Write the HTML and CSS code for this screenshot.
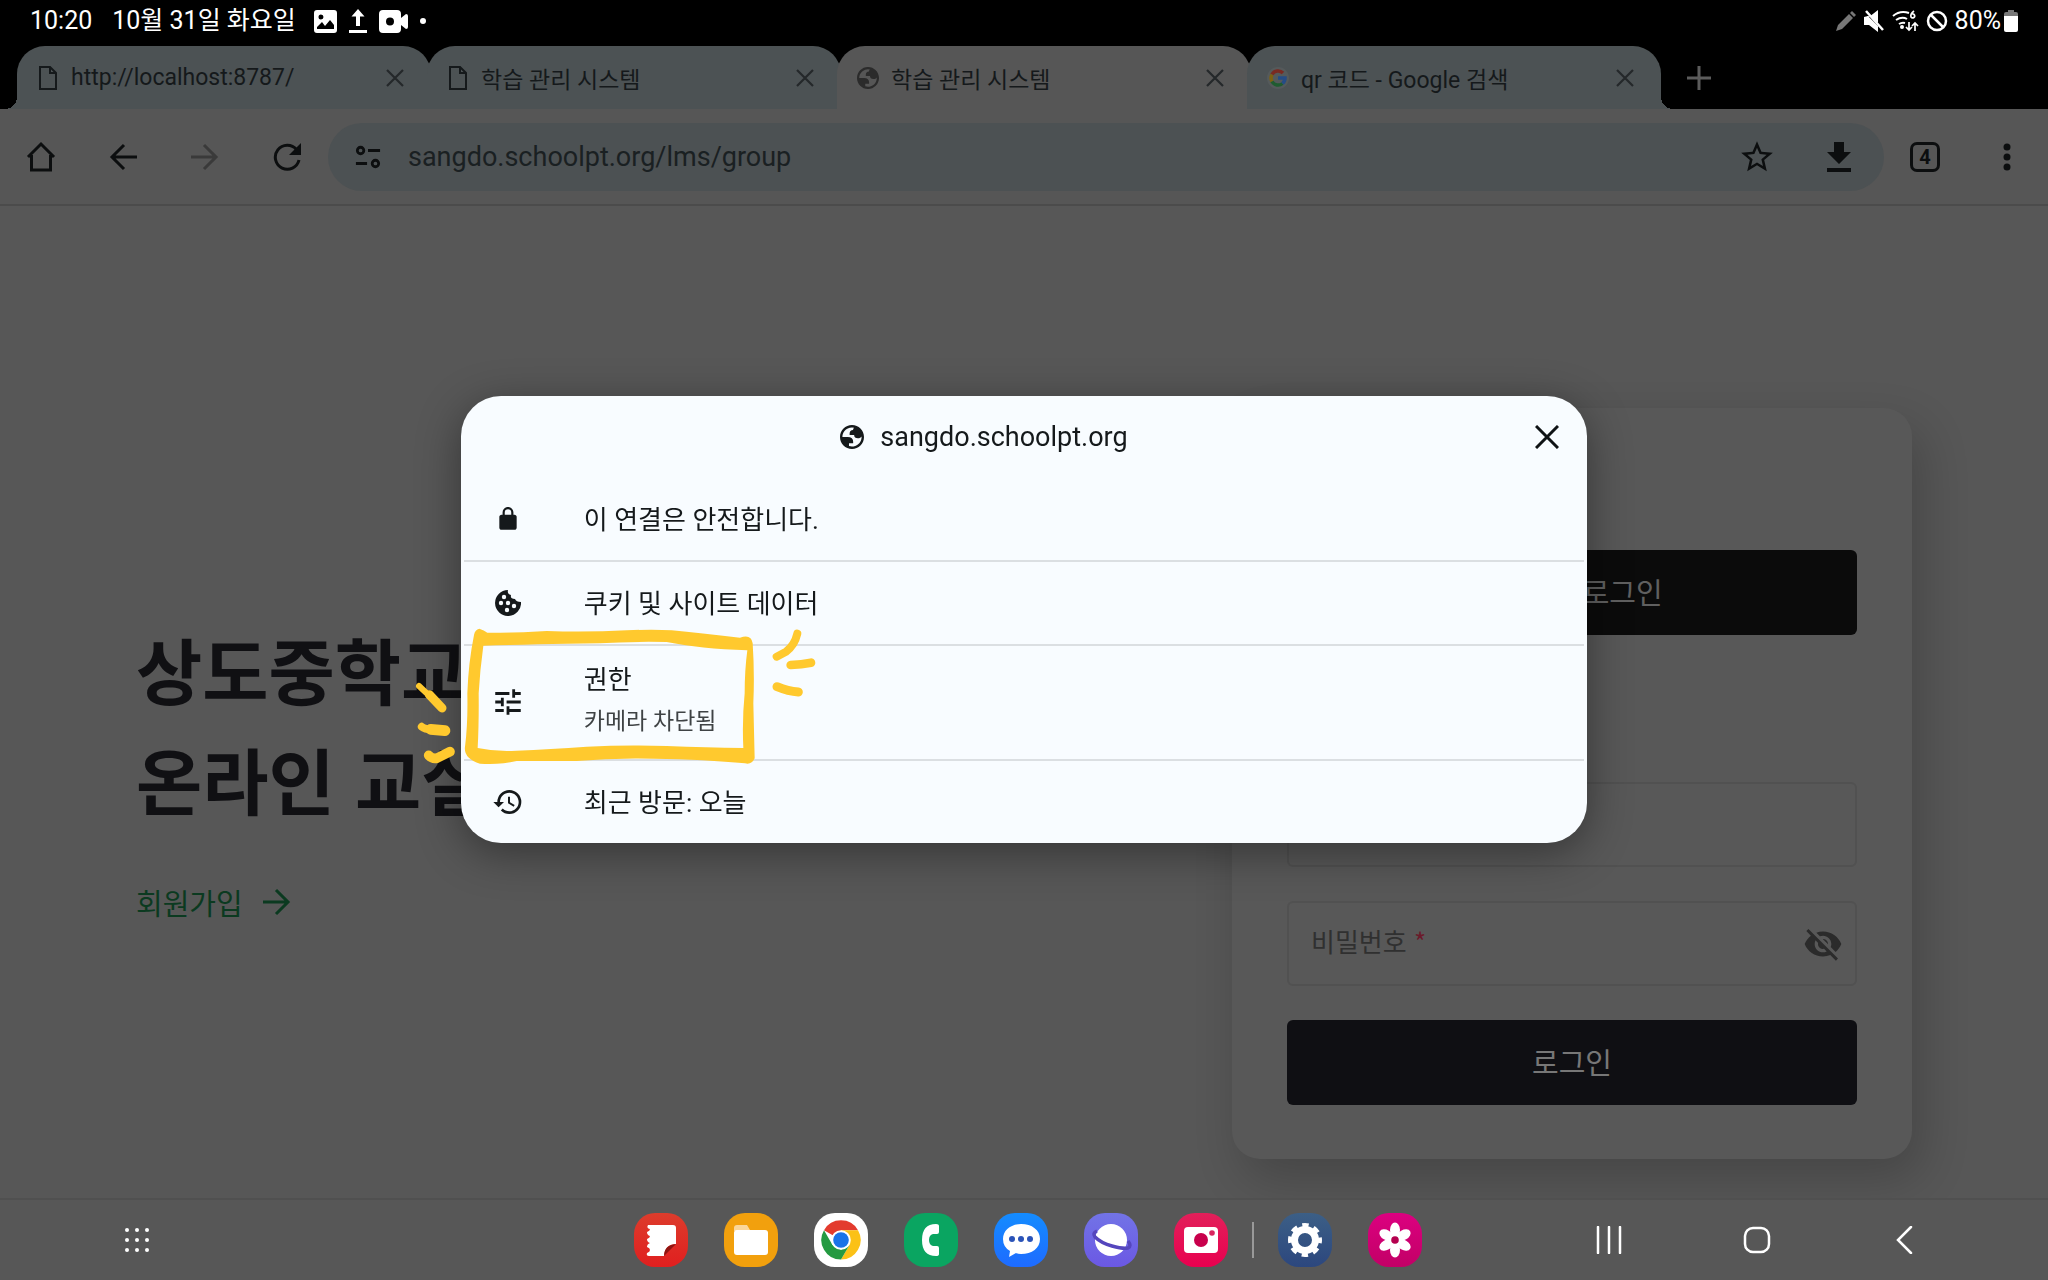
FILE: index.html
```html
<!DOCTYPE html>
<html lang="ko">
<head>
  <meta charset="UTF-8" />
  <meta name="viewport" content="width=device-width, initial-scale=1" />
  <title>학습 관리 시스템</title>
  <link rel="stylesheet" href="styles.css">
</head>
<body>

<!-- shared icons -->
<svg class="sprite" aria-hidden="true">
  <symbol id="i-file" viewBox="0 0 20 26"><path d="M2 2h10l6 6v16H2zM12 2v6h6" fill="none" stroke="currentColor" stroke-width="2" /></symbol>
  <symbol id="i-close" viewBox="0 0 24 24"><path d="M4 4l16 16M20 4L4 20" fill="none" stroke="currentColor" stroke-width="2.2" /></symbol>
  <symbol id="i-globe" viewBox="2 2 20 20"><path fill="currentColor" fill-rule="evenodd" d="M12 2C6.48 2 2 6.48 2 12s4.48 10 10 10 10-4.48 10-10S17.52 2 12 2zM4 12h4.4c3.407.022 4.922 1.73 4.543 5.127H9.488v2.47a8.004 8.004 0 0 0 10.498-8.083C19.327 12.504 18.332 13 17 13c-2.137 0-3.206-.916-3.206-2.75h-3.748c-.274-2.728.683-4.092 2.87-4.092 0-.975.327-1.597.811-1.97A8.004 8.004 0 0 0 4 12z" /></symbol>
</svg>

<header class="status-bar">
  <div class="status-left">
    <span class="time">10:20</span>
    <span class="date">10월 31일 화요일</span>
    <svg width="23" height="23" viewBox="0 0 23 23"><path fill="#fff" fill-rule="evenodd" d="M3 0h17a3 3 0 0 1 3 3v17a3 3 0 0 1-3 3H3a3 3 0 0 1-3-3V3a3 3 0 0 1 3-3zM7 4.500a2.500 2.500 0 1 0 0 5 2.500 2.500 0 0 0 0-5zM3 19v-2l5-5 3 4 5-6 4 5v-2 6z" /></svg>
    <svg width="20" height="24" viewBox="0 0 20 24"><path fill="#fff" d="M10 0l6.500 7.500H12V17H8V7.500H3.500zM1 21h18v3H1z" /></svg>
    <svg width="29" height="23" viewBox="0 0 29 23"><path fill="#fff" fill-rule="evenodd" d="M4 0h14a4 4 0 0 1 4 4v4l5-4q2 0 2 2v11q0 2-2 2l-5-4v4a4 4 0 0 1-4 4H4a4 4 0 0 1-4-4V4a4 4 0 0 1 4-4zM11 7.500a4 4 0 1 0 0 8 4 4 0 0 0 0-8z" /></svg>
    <span class="more-dot"></span>
  </div>
  <div class="status-right">
    <svg width="20" height="20" viewBox="0 0 20 20"><path fill="#777" d="M0 20l2-6L13 3l4 4L6 18zM14 2l2-2 4 4-2 2z" /></svg>
    <svg width="22" height="22" viewBox="0 0 22 22"><path fill="#fff" d="M1 7h5l9-7v13L7 6M1 7v8h5l9 7v-6L5 6z" /><path d="M3 1l17 19" stroke="#fff" stroke-width="2.500" /></svg>
    <svg width="27" height="22" viewBox="0 0 27 22" fill="none" stroke="#fff" stroke-width="2">
      <path d="M1 6Q8 0 17 3M4 10Q10 6 15 9M7 14Q10 12 13 13" /><circle cx="10" cy="17" r="1" />
      <path d="M22 1q-4 3-3 6a2 2 0 1 0 1-3M17 12v8M14 17l3 3 3-3M23 21v-8M20 16l3-3 3 3" stroke-width="1.700" />
    </svg>
    <svg width="22" height="22" viewBox="0 0 22 22" fill="none" stroke="#fff" stroke-width="2.500"><circle cx="11" cy="11" r="9" /><path d="M5 5l12 12" /></svg>
    <div class="battery">
      <span>80%</span>
      <svg width="14" height="22" viewBox="0 0 14 22"><path fill="#777" d="M4 0h6v2h2q2 0 2 2v3H0V4q0-2 2-2h2z" /><path fill="#fff" d="M0 6h14v14q0 2-2 2H2q-2 0-2-2z" /></svg>
    </div>
  </div>
</header>

<div class="tab-strip">
  <div class="tab tab-first">
    <svg class="tab-icon" width="22" height="26"><use href="#i-file" /></svg>
    <span class="tab-title">http://localhost:8787/</span>
    <button class="tab-close" aria-label="탭 닫기"><svg width="24" height="24"><use href="#i-close" /></svg></button>
  </div>
  <div class="tab">
    <svg class="tab-icon" width="22" height="26"><use href="#i-file" /></svg>
    <span class="tab-title">학습 관리 시스템</span>
    <button class="tab-close" aria-label="탭 닫기"><svg width="24" height="24"><use href="#i-close" /></svg></button>
  </div>
  <div class="tab tab-active">
    <svg class="tab-icon tab-globe" width="22" height="22"><use href="#i-globe" /></svg>
    <span class="tab-title">학습 관리 시스템</span>
    <button class="tab-close" aria-label="탭 닫기"><svg width="24" height="24"><use href="#i-close" /></svg></button>
  </div>
  <div class="tab tab-last">
    <svg class="tab-icon" width="22" height="24" viewBox="0 0 22 24" fill="none" stroke-width="3.500">
      <circle cx="11" cy="12" r="11" fill="#555a5b" />
      <path d="M16 7A7 7 0 0 0 5 8.500" stroke="#7a2a22" />
      <path d="M5 8.500a7 7 0 0 0 0 7" stroke="#7d6112" />
      <path d="M5 15.500a7 7 0 0 0 10.500 2" stroke="#1f5c30" />
      <path d="M11 12h7a7 7 0 0 1-2.500 5.500" stroke="#254c86" />
    </svg>
    <span class="tab-title">qr 코드 - Google 검색</span>
    <button class="tab-close" aria-label="탭 닫기"><svg width="24" height="24"><use href="#i-close" /></svg></button>
  </div>
  <button class="new-tab" aria-label="새 탭"><svg width="24" height="24" viewBox="0 0 24 24"><path d="M12 0v24M0 12h24" stroke="currentColor" stroke-width="3" /></svg></button>
</div>

<div class="toolbar">
  <div class="toolbar-group">
    <button class="tool-btn" aria-label="홈"><svg width="32" height="32" viewBox="0 0 32 32"><path d="M3 16L16 3l13 13M6.500 14v15h19V14" fill="none" stroke="currentColor" stroke-width="3" /></svg></button>
    <button class="tool-btn" aria-label="뒤로"><svg width="28" height="28" viewBox="0 0 28 28"><path d="M28 14H3M15 2L3 14l12 12" fill="none" stroke="currentColor" stroke-width="3" /></svg></button>
    <button class="tool-btn tool-off" aria-label="앞으로" disabled><svg width="28" height="28" viewBox="0 0 28 28"><path d="M0 14h25M13 2l12 12-12 12" fill="none" stroke="currentColor" stroke-width="3" /></svg></button>
    <button class="tool-btn" aria-label="새로고침"><svg width="30" height="30" viewBox="0 0 30 30"><path d="M24.500 7.500A12 12 0 1 0 27 18" fill="none" stroke="currentColor" stroke-width="3" /><path d="M29 1v12H17z" fill="currentColor" /></svg></button>
  </div>
  <div class="omnibox">
    <button class="site-info" aria-label="사이트 정보"><svg width="26" height="24" viewBox="0 0 28 24" fill="none" stroke="currentColor" stroke-width="3"><circle cx="6" cy="5" r="3.500" /><path d="M14 5h13M1 19h12" /><circle cx="22" cy="19" r="3.500" /></svg></button>
    <input class="url" type="text" aria-label="주소" value="sangdo.schoolpt.org/lms/group">
    <div class="toolbar-group">
      <button class="tool-btn" aria-label="북마크"><svg width="38" height="38" viewBox="0 0 24 24"><path fill="currentColor" d="M22 9.240l-7.190-.62L12 2 9.190 8.630 2 9.240l5.460 4.730L5.820 21 12 17.270 18.180 21l-1.630-7.030L22 9.240zM12 15.400l-3.760 2.270 1-4.280-3.320-2.880 4.380-.38L12 6.100l1.710 4.040 4.380.38-3.320 2.880 1 4.280L12 15.400z" /></svg></button>
      <button class="tool-btn" aria-label="다운로드"><svg width="26" height="30" viewBox="0 0 26 30"><path fill="currentColor" d="M8 0h10v10h7L13 22 1 10h7zM1 26h24v4H1z" /></svg></button>
    </div>
  </div>
  <div class="toolbar-group">
    <button class="tool-btn" aria-label="탭 전환"><span class="tab-count">4</span></button>
    <button class="tool-btn" aria-label="메뉴"><svg width="8" height="28" viewBox="0 0 8 28" fill="currentColor"><circle cx="4" cy="4" r="3.500" /><circle cx="4" cy="14" r="3.500" /><circle cx="4" cy="24" r="3.500" /></svg></button>
  </div>
</div>

<main class="page">
  <section class="intro">
    <h1>상도중학교<br>온라인 교실</h1>
    <a class="join" href="#join">회원가입
      <svg width="28" height="28" viewBox="0 0 28 28"><path d="M0 14h25M13 2l12 12-12 12" fill="none" stroke="currentColor" stroke-width="3" /></svg>
    </a>
  </section>

  <form class="login-card">
    <button class="btn btn-qr" type="button">QR코드 로그인</button>
    <div class="field">
      <label for="user">아이디 <span class="required">*</span></label>
      <input id="user" type="text">
    </div>
    <div class="field">
      <label for="password">비밀번호 <span class="required">*</span></label>
      <input id="password" type="password">
      <button class="eye" type="button" aria-label="비밀번호 보기"><svg width="40" height="40" viewBox="0 0 24 24"><path fill="currentColor" d="M12 7c2.760 0 5 2.240 5 5 0 .65-.13 1.260-.36 1.830l2.920 2.920c1.510-1.260 2.700-2.890 3.430-4.750-1.730-4.390-6-7.500-11-7.500-1.400 0-2.740.25-3.980.7l2.160 2.160C10.740 7.130 11.350 7 12 7zM2 4.270l2.280 2.280.46.46C3.080 8.300 1.780 10.020 1 12c1.730 4.390 6 7.500 11 7.500 1.550 0 3.030-.3 4.380-.84l.42.42L19.730 22 21 20.730 3.270 3 2 4.270zM7.530 9.800l1.550 1.550c-.05.21-.08.43-.08.65 0 1.660 1.340 3 3 3 .22 0 .44-.03.65-.08l1.550 1.550c-.67.33-1.410.53-2.200.53-2.760 0-5-2.240-5-5 0-.79.2-1.530.53-2.200zm4.310-.78l3.150 3.150.02-.16c0-1.660-1.340-3-3-3l-.17.01z" /></svg></button>
    </div>
    <button class="btn" type="submit">로그인</button>
  </form>
</main>

<!-- 사이트 정보 팝업 -->
<div class="overlay">
  <div class="site-dialog" role="dialog" aria-labelledby="site-name">
    <div class="dialog-head">
      <div class="dialog-title">
        <svg width="24" height="24"><use href="#i-globe" /></svg>
        <span id="site-name">sangdo.schoolpt.org</span>
      </div>
      <button class="dialog-close" aria-label="닫기"><svg width="24" height="24" viewBox="0 0 24 24"><path d="M1 1l22 22M23 1L1 23" fill="none" stroke="currentColor" stroke-width="3" /></svg></button>
    </div>
    <ul class="dialog-list">
      <li>
        <button class="row">
          <svg width="26" height="26" viewBox="0 0 24 24"><path fill="currentColor" fill-rule="evenodd" d="M18 8h-1V6c0-2.760-2.240-5-5-5S7 3.240 7 6v2H6c-1.100 0-2 .9-2 2v10c0 1.100.9 2 2 2h12c1.100 0 2-.9 2-2V10c0-1.100-.9-2-2-2zM9 8V6a3 3 0 0 1 6 0v2z" /></svg>
          <span>이 연결은 안전합니다.</span>
        </button>
      </li>
      <li>
        <button class="row">
          <svg width="26" height="26" viewBox="0 0 26 26"><path fill="currentColor" d="M13 0q-1 4 3 5-1 4 4 4 1 3 6 3a13 13 0 1 1-13-12z" /><g fill="#f8fcff"><circle cx="9" cy="7" r="2.200" /><circle cx="6" cy="13" r="2.200" /><circle cx="13" cy="13" r="2.200" /><circle cx="19" cy="16" r="2.200" /><circle cx="12" cy="20" r="2.200" /></g></svg>
          <span>쿠키 및 사이트 데이터</span>
        </button>
      </li>
      <li class="row-marked">
        <button class="row row-two">
          <svg width="34" height="34" viewBox="0 0 24 24"><path fill="currentColor" d="M3 17v2h6v-2H3zM3 5v2h10V5H3zm10 16v-2h8v-2h-8v-2h-2v6h2zM7 9v2H3v2h4v2h2V9H7zm14 4v-2H11v2h10zm-6-4h2V7h4V5h-4V3h-2v6z" /></svg>
          <span>권한<small>카메라 차단됨</small></span>
        </button>
        <!-- hand drawn marker -->
        <svg class="marker" width="410" height="142" viewBox="30 735 1230 426" aria-hidden="true">
          <path fill="#ffc92e" fill-rule="evenodd" d="M238 746Q252 750 262 758Q350 760 440 753Q560 757 680 751Q760 747 815 751Q900 760 1020 773Q1054 761 1058 790Q1064 880 1060 970L1064 1135Q1055 1155 1035 1150Q920 1138 760 1136Q640 1133 530 1143L350 1143Q300 1155 240 1151Q190 1135 195 1100Q204 1030 202 940Q205 850 222 765Q225 748 238 746zM250 797Q240 870 236 940Q237 1030 233 1104Q290 1116 350 1112Q450 1108 560 1100Q680 1094 800 1098Q920 1103 1030 1104Q1026 1020 1034 940Q1034 870 1042 811Q900 806 800 786Q690 784 600 790Q400 793 250 797z" />
          <g fill="none" stroke="#ffc92e" stroke-linecap="round" stroke-linejoin="round">
            <path d="M1192 761Q1184 796 1158 815L1130 830" stroke-width="24" />
            <path d="M1172 855Q1205 853 1233 848" stroke-width="26" />
            <path d="M1131 920Q1165 934 1195 936" stroke-width="27" />
            <path d="M57 918L126 983" stroke-width="18" />
            <path d="M88 944L126 984" stroke-width="27" />
            <path d="M65 1040Q75 1048 95 1048" stroke-width="23" />
            <path d="M92 1048L135 1052" stroke-width="32" />
            <path d="M86 1126Q98 1138 112 1134L150 1115" stroke-width="29" />
          </g>
        </svg>
      </li>
      <li>
        <button class="row">
          <svg width="32" height="32" viewBox="0 0 24 24"><path fill="currentColor" d="M13 3a9 9 0 0 0-9 9H1l3.890 3.890.07.14L9 12H6c0-3.870 3.130-7 7-7s7 3.130 7 7-3.130 7-7 7c-1.930 0-3.680-.79-4.940-2.060l-1.420 1.420A8.954 8.954 0 0 0 13 21a9 9 0 0 0 0-18zm-1 5v5l4.280 2.540.72-1.210-3.500-2.080V8H12z" /></svg>
          <span>최근 방문: 오늘</span>
        </button>
      </li>
    </ul>
  </div>
</div>

<nav class="taskbar">
  <button class="apps-btn" aria-label="모든 앱">
    <svg width="26" height="26" viewBox="0 0 26 26" fill="#fff">
      <circle cx="3" cy="3" r="2" /><circle cx="13" cy="3" r="2" /><circle cx="23" cy="3" r="2" />
      <circle cx="3" cy="13" r="2" /><circle cx="13" cy="13" r="2" /><circle cx="23" cy="13" r="2" />
      <circle cx="3" cy="23" r="2" /><circle cx="13" cy="23" r="2" /><circle cx="23" cy="23" r="2" />
    </svg>
  </button>

  <div class="dock">
    <div class="dock-group">
      <button class="app notes" aria-label="노트"><svg viewBox="0 0 54 54"><path fill="#fff" d="M14 12h25q3 0 3 3v16q-11 0-12 12H15q-3 0-2-3 3-1 3-3t-3-3q0-3 3-4-3-1-3-4 3-1 3-3-3-1-3-4 3-1 3-3-4-1-2-4z" /><path fill="#8f1512" d="M42 31L30 43q0-11 12-12z" /></svg></button>
      <button class="app files" aria-label="내 파일"><svg viewBox="0 0 54 54"><path fill="#fbd699" d="M10 18v-3q0-3 3-3h10l3 5v4z" /><rect x="10" y="17" width="34" height="25" rx="3" fill="#fff" /></svg></button>
      <button class="app chrome" aria-label="Chrome"><svg viewBox="0 0 54 54">
        <path fill="#e33b2e" d="M27 27L10 17.200A19.600 19.600 0 0 1 44 17.200H27z" />
        <path fill="#fbc116" d="M44 17.200A19.600 19.600 0 0 1 27 46.600L35.500 32 27 17.200z" />
        <path fill="#249a41" d="M27 46.600A19.600 19.600 0 0 1 10 17.200L18.500 32 27 36.800 35.500 32z" />
        <circle cx="27" cy="27" r="9.800" fill="#fff" /><circle cx="27" cy="27" r="7.800" fill="#1a73e8" /></svg></button>
      <button class="app phone" aria-label="전화"><svg viewBox="0 0 54 54"><path fill="#fff" d="M32 11q3 0 3 2v6q0 2-2 2h-4q-4 1-4 6t4 6h4q2 0 2 2v6q0 2-3 2-14 0-14-16t14-16z" /></svg></button>
      <button class="app messages" aria-label="메시지"><svg viewBox="0 0 54 54"><path fill="#fff" d="M27 11c11 0 19 6 19 15s-8 15-19 15q-3 0-5-1l-7 4 1-6q-7-4-7-12c0-9 8-15 18-15z" /><g fill="#2a53b8"><circle cx="18" cy="26" r="3" /><circle cx="27" cy="26" r="3" /><circle cx="36" cy="26" r="3" /></g></svg></button>
      <button class="app internet" aria-label="인터넷"><svg viewBox="0 0 54 54"><circle cx="27" cy="27" r="16" fill="#fff" /><path d="M13 18q-5 2-2 6 6 6 17 9t16 2q4-2 0-7" fill="none" stroke="#5546bd" stroke-width="3.500" /></svg></button>
      <button class="app camera" aria-label="카메라"><svg viewBox="0 0 54 54"><rect x="10" y="14" width="34" height="26" rx="4" fill="#fff" /><circle cx="27" cy="27" r="7" fill="#c8004c" /><circle cx="38" cy="20" r="2.800" fill="#d8265f" /></svg></button>
    </div>
    <span class="dock-line"></span>
    <div class="dock-group">
      <button class="app settings" aria-label="설정"><svg viewBox="0 0 54 54"><circle cx="27" cy="27" r="10.500" fill="none" stroke="#fff" stroke-width="7" /><circle cx="27" cy="27" r="14.500" fill="none" stroke="#fff" stroke-width="5" stroke-dasharray="6.200 5.188" stroke-dashoffset="3.100" /></svg></button>
      <button class="app gallery" aria-label="갤러리"><svg viewBox="0 0 54 54"><g fill="#fff">
        <ellipse cx="27" cy="17" rx="5" ry="7.500" /><ellipse cx="27" cy="17" rx="5" ry="7.500" transform="rotate(60 27 27)" /><ellipse cx="27" cy="17" rx="5" ry="7.500" transform="rotate(120 27 27)" /><ellipse cx="27" cy="17" rx="5" ry="7.500" transform="rotate(180 27 27)" /><ellipse cx="27" cy="17" rx="5" ry="7.500" transform="rotate(240 27 27)" /><ellipse cx="27" cy="17" rx="5" ry="7.500" transform="rotate(300 27 27)" /><circle cx="27" cy="27" r="6" /></g><circle cx="27" cy="27" r="3.800" fill="#b5004f" /></svg></button>
    </div>
  </div>

  <div class="sys-nav">
    <button aria-label="최근 앱"><svg width="28" height="28" viewBox="0 0 28 28"><path d="M3 1v26M14 1v26M25 1v26" stroke="#fff" stroke-width="2.500" stroke-linecap="round" /></svg></button>
    <button aria-label="홈 화면"><svg width="28" height="28" viewBox="0 0 28 28"><rect x="2" y="2" width="24" height="24" rx="8" fill="none" stroke="#fff" stroke-width="2.500" /></svg></button>
    <button aria-label="뒤로"><svg width="28" height="28" viewBox="0 0 28 28"><path d="M20 1L7 14l13 13" fill="none" stroke="#fff" stroke-width="2.500" stroke-linecap="round" /></svg></button>
  </div>
</nav>

</body>
</html>
```

FILE: styles.css
```css
* {
  box-sizing: border-box;
}

body {
  margin: 0;
  min-height: 100vh;
  display: flex;
  flex-direction: column;
  background-color: #575757;
  color: #15191b;
  font-family: Roboto, "Noto Sans CJK KR", sans-serif;
}

button {
  display: flex;
  align-items: center;
  justify-content: center;
  padding: 0;
  border: none;
  background: none;
  color: inherit;
  font: inherit;
  cursor: pointer;
}

input {
  flex: 1;
  min-width: 0;
  padding: 0;
  border: none;
  outline: none;
  background: none;
  color: inherit;
  font: inherit;
}

svg {
  flex: none;
  display: block;
}

.sprite {
  position: absolute;
  width: 0;
  height: 0;
}

/* status bar */
.status-bar {
  height: 46px;
  padding: 0 30px 4px;
  display: flex;
  align-items: center;
  justify-content: space-between;
  background-color: #000;
  color: #fff;
  font-size: 25px;
  line-height: 30px;
}

.status-left {
  display: flex;
  align-items: center;
  gap: 12px;
}

.date {
  margin: 0 6px 0 8px;
}

.status-left svg + svg {
  margin-left: -1px;
}

.more-dot {
  width: 6px;
  height: 6px;
  border-radius: 50%;
  background-color: #fff;
}

.status-right {
  display: flex;
  align-items: center;
  gap: 7px;
}

.battery {
  display: flex;
  align-items: center;
  gap: 3px;
}

/* tabs */
.tab-strip {
  height: 63px;
  padding-left: 17px;
  display: flex;
  background-color: #000;
}

.tab {
  position: relative;
  flex: 0 1 414px;
  min-width: 0;
  padding: 0 24px 0 20px;
  display: flex;
  align-items: center;
  gap: 12px;
  border-radius: 28px 28px 0 0;
  background-color: #4c5254;
  color: #15191b;
  font-size: 23px;
}

.tab + .tab {
  margin-left: -4px;
}

.tab-active {
  background-color: #565656;
}

.tab-first::before,
.tab-last::after {
  content: "";
  position: absolute;
  bottom: 0;
  width: 12px;
  height: 12px;
}

.tab-first::before {
  left: -12px;
  background: radial-gradient(circle at 0 0, transparent 12px, #4c5254 12px);
}

.tab-last::after {
  right: -12px;
  background: radial-gradient(circle at 100% 0, transparent 12px, #4c5254 12px);
}

.tab-globe {
  color: #2b2b2b;
}

.tab-title {
  flex: 1;
  overflow: hidden;
  white-space: nowrap;
}

.tab-close {
  color: #24282a;
}

.new-tab {
  margin-left: 26px;
  color: #5c5c5c;
}

/* toolbar */
.toolbar {
  height: 97px;
  padding: 0 21px;
  display: flex;
  align-items: center;
  gap: 21px;
  border-bottom: 2px solid #4b4b4b;
  background-color: #565656;
}

.toolbar-group {
  display: flex;
  gap: 42px;
}

.tool-btn {
  width: 40px;
  height: 40px;
  color: #0c0e0f;
}

.tool-off {
  color: #3a3a3a;
}

.omnibox {
  flex: 1;
  height: 68px;
  padding: 0 25px 0 27px;
  display: flex;
  align-items: center;
  gap: 27px;
  border-radius: 34px;
  background-color: #4c5153;
}

.site-info {
  color: #0c0e0f;
}

.url {
  color: #1a2022;
  font-size: 27px;
}

.tab-count {
  width: 30px;
  height: 30px;
  border: 3px solid #0c0e0f;
  border-radius: 7px;
  font-size: 20px;
  font-weight: bold;
  line-height: 24px;
}

/* page behind the popup */
.page {
  flex: 1;
  padding: 202px 136px 39px;
  display: flex;
  align-items: center;
  justify-content: space-between;
  font-family: "Noto Sans CJK KR", sans-serif;
}

.intro {
  padding-bottom: 32px;
}

.intro h1 {
  margin: 0 0 48px;
  color: #101013;
  font-size: 72px;
  font-weight: bold;
  line-height: 110px;
}

.join {
  display: inline-flex;
  align-items: center;
  gap: 20px;
  color: #0b3a20;
  font-size: 29px;
  line-height: 42px;
  text-decoration: none;
}

.login-card {
  flex: 0 1 680px;
  padding: 142px 55px 54px;
  display: flex;
  flex-direction: column;
  gap: 34px;
  border-radius: 28px;
  background-color: #585858;
  box-shadow: 10px 20px 48px rgba(0, 0, 0, 0.2);
}

.btn {
  height: 85px;
  padding-bottom: 4px;
  border-radius: 6px;
  background-color: #0f0f13;
  color: #777;
  font-size: 29px;
}

.btn-qr {
  margin-bottom: 113px;
  background-color: #0b0b0b;
  color: #606060;
}

.field {
  height: 85px;
  padding: 0 12px 0 22px;
  display: flex;
  align-items: center;
  border: 2px solid #515151;
  border-radius: 6px;
}

.field label {
  padding-bottom: 6px;
  color: #303030;
  font-size: 26px;
}

.required {
  color: #6b1a2a;
}

.eye {
  color: #2b2b2b;
}

/* site info popup */
.overlay {
  position: fixed;
  inset: 0;
  padding-bottom: 42px;
  display: flex;
  align-items: center;
  justify-content: center;
}

.site-dialog {
  width: 55%;
  border-radius: 40px;
  background-color: #f8fcff;
  box-shadow: 0 10px 44px rgba(0, 0, 0, 0.4);
}

.dialog-head {
  height: 82px;
  padding: 0 28px;
  display: flex;
  align-items: center;
}

.dialog-title {
  flex: 1;
  padding-right: 56px;
  display: flex;
  align-items: center;
  justify-content: center;
  gap: 16px;
  font-size: 27px;
}

.dialog-close {
  color: #0f1315;
}

.dialog-list {
  margin: 0;
  padding: 0 3px;
  list-style: none;
  font-size: 26px;
}

.dialog-list li + li {
  border-top: 2px solid #dbdfe2;
}

.row {
  width: 100%;
  min-height: 82px;
  display: grid;
  grid-template-columns: 88px 1fr;
  justify-items: center;
  gap: 32px;
}

.row span {
  justify-self: start;
  padding-bottom: 2px;
  text-align: left;
}

.row-two {
  min-height: 113px;
  line-height: 41px;
}

.row small {
  display: block;
  color: #3f4345;
  font-size: 23px;
}

.row-marked {
  position: relative;
}

.marker {
  position: absolute;
  top: -21px;
  left: -54px;
  pointer-events: none;
}

/* taskbar */
.taskbar {
  height: 82px;
  padding: 0 116px 0 124px;
  display: grid;
  grid-template-columns: 1fr auto 1fr;
  align-items: center;
  border-top: 2px solid #505050;
  background-color: #575757;
}

.apps-btn {
  justify-self: start;
}

.dock {
  display: flex;
  align-items: center;
  gap: 24px;
}

.dock-group {
  display: flex;
  gap: 36px;
}

.dock-line {
  width: 2px;
  height: 36px;
  background-color: #999;
}

.app {
  width: 54px;
  height: 54px;
  border-radius: 21px;
}

.app svg {
  width: 100%;
  height: 100%;
}

.notes { background: linear-gradient(#dd3c2c, #e01f1f); }
.files { background: #f2a00d; }
.chrome { background: #fff; }
.phone { background: #0aa561; }
.messages { background: linear-gradient(#148cff, #1e6bff); }
.internet { background: linear-gradient(#7273e6, #6b58e4); }
.camera { background: linear-gradient(#e2205a, #e8004f); }
.settings { background: linear-gradient(#3c5f86, #2c477e); }
.gallery { background: linear-gradient(#dc0080, #c20066); }

.sys-nav {
  justify-self: end;
  display: flex;
  gap: 94px;
}

.sys-nav button {
  width: 54px;
  height: 54px;
}
```
